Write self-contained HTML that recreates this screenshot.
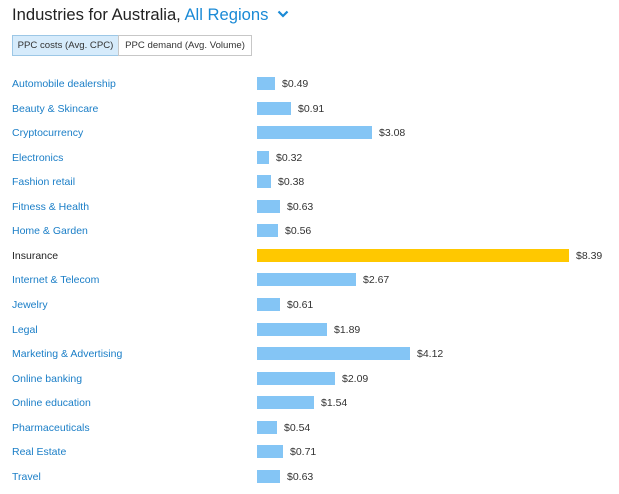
<!DOCTYPE html>
<html><head><meta charset="utf-8"><style>
body{margin:0;width:619px;height:494px;background:#fff;font-family:"Liberation Sans",sans-serif;position:relative;overflow:hidden}
.t{position:absolute;left:12px;top:5px;font-size:16.6px;color:#222;white-space:nowrap}
.t span{color:#1a8ad6}
.btn{position:absolute;top:35px;height:21px;line-height:20px;font-size:9.6px;color:#333;border:1px solid #c7c7c7;box-sizing:border-box;text-align:center}
.r{position:absolute;left:0;width:619px;height:14px}
.l{position:absolute;left:12px;top:0;font-size:10.5px;color:#1a7ec7;line-height:14px;white-space:nowrap}
.b{position:absolute;left:257px;top:0;height:13px;background:#84c5f5}
.v{position:absolute;top:0;font-size:10.5px;color:#333;line-height:14px}
</style></head><body>
<div class="t">Industries for Australia, <span>All Regions</span>
<svg width="12" height="8" style="margin-left:4px;vertical-align:2px" viewBox="0 0 12 8"><path d="M1.5 1.5 6 6 10.5 1.5" fill="none" stroke="#1a8ad6" stroke-width="2.2"/></svg></div>
<div class="btn" style="left:12px;width:107px;background:#d6ebfb;border-color:#9cc7e6">PPC costs (Avg. CPC)</div>
<div class="btn" style="left:118px;width:134px;background:#fff">PPC demand (Avg. Volume)</div>
<div id="c"></div>
<script>
var d=[["Automobile dealership",0.49],["Beauty & Skincare",0.91],["Cryptocurrency",3.08],["Electronics",0.32],["Fashion retail",0.38],["Fitness & Health",0.63],["Home & Garden",0.56],["Insurance",8.39],["Internet & Telecom",2.67],["Jewelry",0.61],["Legal",1.89],["Marketing & Advertising",4.12],["Online banking",2.09],["Online education",1.54],["Pharmaceuticals",0.54],["Real Estate",0.71],["Travel",0.63]];
var h="";d.forEach(function(x,i){var w=Math.round(x[1]*37.2);var top=Math.round(77+i*24.56);var ins=x[0]=="Insurance";
h+='<div class="r" style="top:'+top+'px"><div class="l" style="'+(ins?'color:#222':'')+'">'+x[0].replace('&','&amp;')+'</div><div class="b" style="width:'+w+'px;'+(ins?'background:#ffc800':'')+'"></div><div class="v" style="left:'+(257+w+7)+'px">$'+x[1].toFixed(2)+'</div></div>';});
document.getElementById("c").innerHTML=h;
</script>
</body></html>
